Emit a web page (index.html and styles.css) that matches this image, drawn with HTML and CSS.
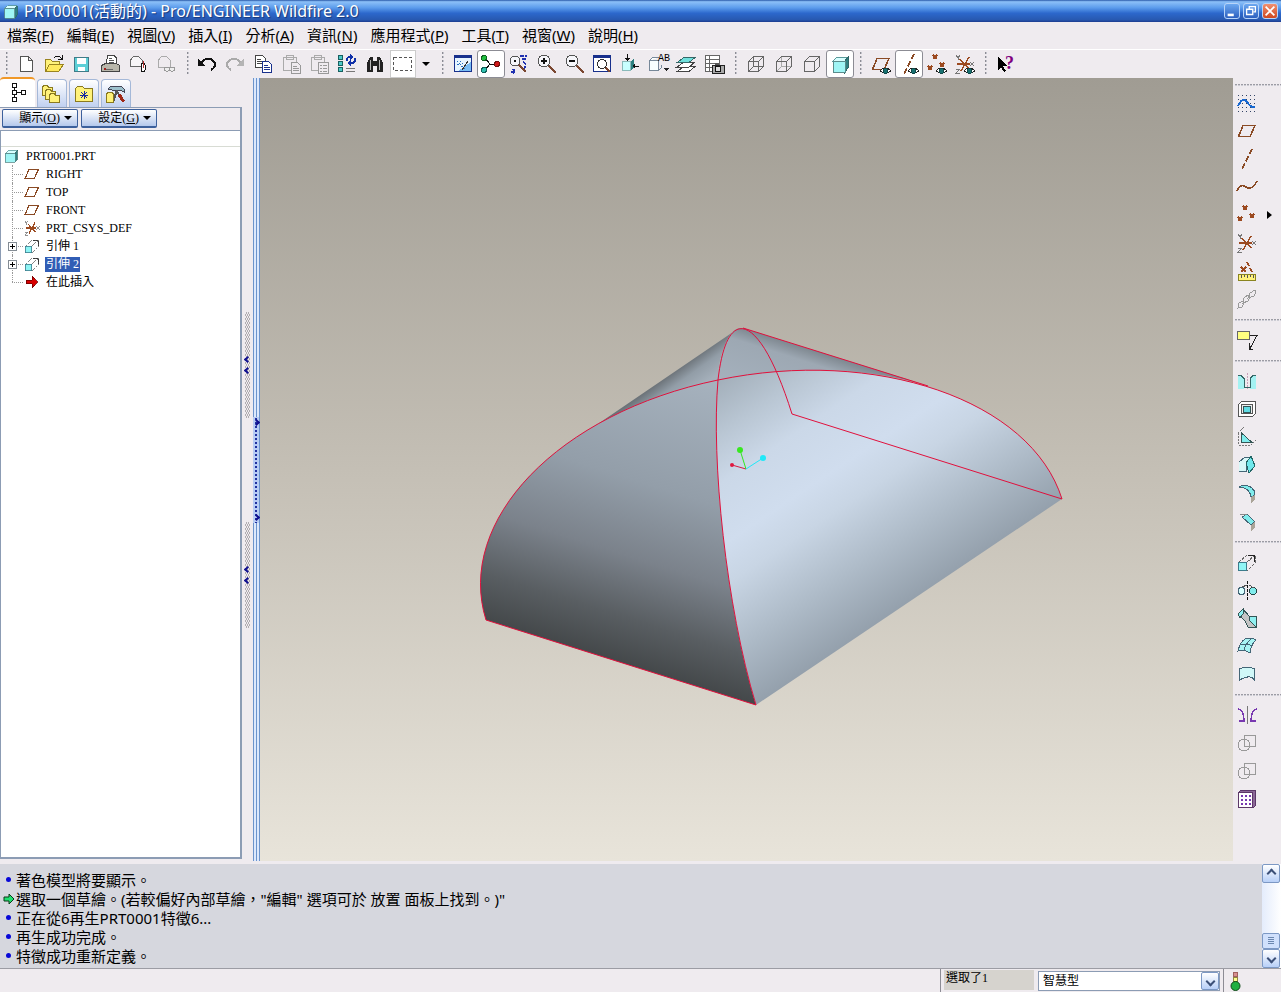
FILE: index.html
```html
<!DOCTYPE html>
<html lang="zh-Hant">
<head>
    <meta charset="UTF-8">
    <meta name="viewport" content="width=device-width, initial-scale=1.0">
    <title>PRT0001(活動的) - Pro/ENGINEER Wildfire 2.0</title>
    <link rel="stylesheet" href="styles.css">
</head>
<body>

<!-- Shared icons -->
<svg class="symbols" width="0" height="0">
    <symbol id="part" viewBox="0 0 20 20">
        <path d="M3 7l4-4h11l-3 4z" fill="#d8ffff" stroke="#5a9a9a"/>
        <path d="M15 7l3-4v11l-3 4z" fill="#2f8080" stroke="#2f6868"/>
        <path d="M3 7h12v11H3z" fill="#9ff5f5" stroke="#5a8c8c"/>
    </symbol>
    <symbol id="plane" viewBox="0 0 20 20">
        <path d="M6 4.500h12L13 15.500H1.500z" fill="none" stroke="#8a4a24" stroke-width="1.500"/>
    </symbol>
    <symbol id="axis" viewBox="0 0 20 20">
        <path d="M15 0L5 20" fill="none" stroke="#8a4a24" stroke-width="2" stroke-dasharray="6 2"/>
    </symbol>
    <symbol id="points" viewBox="0 0 20 20">
        <path d="M6 1l4 4m0-4l-4 4M1 12l4 4m0-4l-4 4M13 9l4 4m0-4l-4 4" fill="none" stroke="#9c4a20" stroke-width="1.500"/>
    </symbol>
    <symbol id="csys" viewBox="0 0 20 20">
        <path d="M2 10h13M5 5l9 10M14 3L6 17" fill="none" stroke="#9c4a20" stroke-width="1.500"/>
        <path d="M1 1l2 3 2-3M3 4v2M15 8l4 4m0-4l-4 4M1 15h4l-4 4h4" fill="none" stroke="#777"/>
    </symbol>
    <symbol id="eye" viewBox="0 0 20 20">
        <path d="M9 17q5-6 11 0q-5 4-11 0z" fill="#fff" stroke="#222"/>
        <circle cx="14.500" cy="17" r="2.500" fill="#187070" stroke="#104848"/>
    </symbol>
    <symbol id="extrude" viewBox="0 0 20 20">
        <path d="M2 10l8-7h8v8l-8 8M10 10l7-6" fill="none" stroke="#666" stroke-dasharray="3 1"/>
        <path d="M11 3.500h6.500v6" fill="none" stroke="#222"/>
        <path d="M1.500 10.500h8v8h-8z" fill="#8ff5f5" stroke="#3c7c8c"/>
    </symbol>
    <symbol id="glass" viewBox="0 0 20 20">
        <path d="M12 12l7 7" stroke="#7a4630" stroke-width="2"/>
        <circle cx="7" cy="7" r="6" fill="#f6f6fa" stroke="#555"/>
    </symbol>
    <symbol id="merge" viewBox="0 0 20 20">
        <path d="M7.500 2.500h11v11h-11z" fill="none" stroke="#999"/>
        <circle cx="7" cy="12" r="6" fill="none" stroke="#999"/>
    </symbol>
    <symbol id="folder" viewBox="0 0 20 20">
        <path d="M1.500 4.500l2-2h5l2 2h8v13h-17z" fill="#fff27a" stroke="#8a7a20"/>
    </symbol>
    <symbol id="paste" viewBox="0 0 20 20">
        <path d="M1.500 3.500h13v13h-13zM4.500 1.500h7v4h-7z" fill="none" stroke="#aaa"/>
        <path d="M9.500 8.500h6l3 3v8h-9zM11 12h4M11 14h6M11 16h6" fill="#efebef" stroke="#999"/>
    </symbol>
    <symbol id="paste-special" viewBox="0 0 20 20">
        <path d="M1.500 3.500h13v13h-13zM4.500 1.500h7v4h-7z" fill="none" stroke="#aaa"/>
        <path d="M8.500 8.500h10v11h-10zM10 11h2M13 11h4M10 14h2M13 14h4M10 17h2M13 17h4" fill="#efebef" stroke="#999"/>
    </symbol>
</svg>

<header class="titlebar">
    <svg class="icon"><use href="#part"/></svg>
    <h1 class="title">PRT0001(活動的) - Pro/ENGINEER Wildfire 2.0</h1>
    <div class="window-buttons">
        <button class="win-btn" aria-label="最小化"><svg viewBox="0 0 16 16"><path d="M3 11h7v3H3z" fill="#fff"/></svg></button>
        <button class="win-btn" aria-label="還原"><svg viewBox="0 0 16 16"><path d="M6 5V3h7v6h-2M3 6h7v6H3z" fill="none" stroke="#fff" stroke-width="1.500"/></svg></button>
        <button class="win-btn win-close" aria-label="關閉"><svg viewBox="0 0 16 16"><path d="M3 3l10 10M13 3L3 13" stroke="#fff" stroke-width="2"/></svg></button>
    </div>
</header>

<nav class="menubar">
    <button>檔案(<u>F</u>)</button>
    <button>編輯(<u>E</u>)</button>
    <button>視圖(<u>V</u>)</button>
    <button>插入(<u>I</u>)</button>
    <button>分析(<u>A</u>)</button>
    <button>資訊(<u>N</u>)</button>
    <button>應用程式(<u>P</u>)</button>
    <button>工具(<u>T</u>)</button>
    <button>視窗(<u>W</u>)</button>
    <button>說明(<u>H</u>)</button>
</nav>

<div class="toolbar">
    <span class="handle"></span>
    <button class="tool" aria-label="新建"><svg class="icon" viewBox="0 0 20 20"><path d="M3.500 2.500h8l4 4v11h-12zM11.500 2.500v4h4" fill="#fff" stroke="#555"/></svg></button>
    <button class="tool" aria-label="開啟"><svg class="icon" viewBox="0 0 20 20"><path d="M.500 17V5.500h5l2 2h7V10" fill="#fff27a" stroke="#9a8420"/><path d="M.500 17.500l4-7h14l-5 7z" fill="#ffe95e" stroke="#9a8420"/><path d="M9 4q4-4 8 1M17 1v4h-4" fill="none" stroke="#111"/></svg></button>
    <button class="tool" aria-label="儲存"><svg class="icon" viewBox="0 0 20 20"><path d="M1.500 3.500h14v14h-14z" fill="#5ccfd6" stroke="#407c88"/><path d="M4 4h9v6H4zM5 13h7v4H5z" fill="#fff"/></svg></button>
    <button class="tool" aria-label="列印"><svg class="icon" viewBox="0 0 20 20"><path d="M5.500 10l1-9h6l3 3V10" fill="#fff" stroke="#444"/><path d="M8 4h3M8 6h5M8 8h5" stroke="#555"/><path d="M.500 11.500l4-2h11l3 2v6h-18z" fill="#b8b6aa" stroke="#444"/><path d="M3 15h9" stroke="#666"/><path d="M3 15h2" stroke="#a02020" stroke-width="2"/></svg></button>
    <button class="tool" aria-label="傳送附件"><svg class="icon" viewBox="0 0 20 20"><path d="M2 12.500h11V6l-4-4H5L1.500 6v6.500" fill="#f7f5f7" stroke="#666"/><rect x="12" y="9" width="4" height="9" rx="2" fill="#fff" stroke="#111"/><path d="M14 7v7" stroke="#b03030"/></svg></button>
    <button class="tool" aria-label="傳送連結"><svg class="icon" viewBox="0 0 20 20"><path d="M2 13.500h11V6l-4-4H5L1.500 6v7.500z" fill="none" stroke="#aaa"/><rect x="7" y="13" width="6" height="4" rx="2" fill="#eee" stroke="#999"/><rect x="12" y="13" width="6" height="4" rx="2" fill="#eee" stroke="#999"/></svg></button>
    <span class="handle"></span>
    <button class="tool" aria-label="復原"><svg class="icon" viewBox="0 0 20 20"><path d="M3 9q8-9 14 0q1 4-4 7" fill="none" stroke="#111" stroke-width="2"/><path d="M0 5v7h8z" fill="#111"/></svg></button>
    <button class="tool" aria-label="重做"><svg class="icon" viewBox="0 0 20 20"><path d="M15 9Q8 0 1 9q-1 4 4 7" fill="none" stroke="#aaa" stroke-width="2"/><path d="M18 5v7h-8z" fill="#b4b4b4"/></svg></button>
    <button class="tool" aria-label="複製"><svg class="icon" viewBox="0 0 20 20"><path d="M1.500 1.500h7l3 3v9h-10zM3 5h4M3 7h6M3 9h6" fill="#fff" stroke="#444"/><path d="M8.500 7.500h6l3 3v8h-9zM10 11h4M10 13h6M10 15h6" fill="#fff" stroke="#18308c"/></svg></button>
    <button class="tool" aria-label="貼上"><svg class="icon"><use href="#paste"/></svg></button>
    <button class="tool" aria-label="選擇性貼上"><svg class="icon"><use href="#paste-special"/></svg></button>
    <button class="tool" aria-label="再生"><svg class="icon" viewBox="0 0 20 20"><path d="M.500 1.500h4v4h-4zM.500 7.500h4v4h-4zM.500 13.500h4v4h-4z" fill="#4cc8c8" stroke="#186060"/><path d="M9 7q-1-5 5-4M17 4q2 5-5 5" fill="none" stroke="#1030a8" stroke-width="2"/><path d="M12 0v6l4-3zM13 6v6l-4-3z" fill="#1030a8"/><path d="M8 14h9M8 17h9" stroke="#777"/></svg></button>
    <button class="tool" aria-label="尋找"><svg class="icon" viewBox="0 0 20 20"><path d="M1 9l3-6h3v4h4V3h3l3 6v9h-6v-6H7v6H1z" fill="#222"/><path d="M4 6v10M13 6v10" stroke="#bbb"/></svg></button>
    <button class="tool tool-select" aria-label="選取框"><svg class="icon" viewBox="0 0 20 20"><path d="M.500 3.500h18v13h-18z" fill="none" stroke="#555" stroke-dasharray="3 2"/></svg></button>
    <button class="tool tool-drop" aria-label="選取選項"><span class="arrow-down"></span></button>
    <span class="handle"></span>
    <button class="tool" aria-label="重繪"><svg class="icon" viewBox="0 0 20 20"><path d="M1.500 1.500h17v16h-17z" fill="#e6f4ff" stroke="#18308c"/><path d="M1 1h18v3H1z" fill="#18308c"/><path d="M5 17l13-9v9z" fill="#78bcf4"/><path d="M4 7l4 4M4 10l4 1M8 12l5 3M7 7l3 3" stroke="#2870c0" stroke-dasharray="2 1"/><path d="M9 16l6-9" stroke="#333"/></svg></button>
    <button class="tool pressed" aria-label="旋轉中心"><svg class="icon" viewBox="0 0 20 20"><path d="M4 4l5 6-5 6M9 10h7" fill="none" stroke="#111"/><circle cx="3" cy="4" r="2.500" fill="#22c040" stroke="#106020"/><circle cx="3" cy="16" r="2.500" fill="#30c0b0" stroke="#106058"/><circle cx="16" cy="10" r="2.500" fill="#d01818" stroke="#701010"/></svg></button>
    <button class="tool" aria-label="定向模式"><svg class="icon" viewBox="0 0 20 20"><path d="M10 11l7 7" stroke="#7a4630" stroke-width="2"/><circle cx="6" cy="7" r="5" fill="#f6f6fa" stroke="#555"/><circle cx="6" cy="7" r="1" fill="#111"/><path d="M11 2h7M13 5h5M14 8q5 3 1 6M5 19q-4-1-2-4M5 15v5" fill="none" stroke="#2030b0" stroke-width="1.500" stroke-dasharray="4 1"/></svg></button>
    <button class="tool" aria-label="放大"><svg class="icon"><use href="#glass"/><path d="M4 7h6M7 4v6" stroke="#111" stroke-width="2"/></svg></button>
    <button class="tool" aria-label="縮小"><svg class="icon"><use href="#glass"/><path d="M4 7h6" stroke="#111" stroke-width="2"/></svg></button>
    <button class="tool" aria-label="重新調整"><svg class="icon" viewBox="0 0 20 20"><path d="M.500 1.500h17v16h-17z" fill="#fff" stroke="#18308c"/><path d="M0 1h18v3H0z" fill="#18308c"/><path d="M12 13l5 5" stroke="#7a4630" stroke-width="2"/><circle cx="9" cy="10" r="4.500" fill="#fff" stroke="#333"/></svg></button>
    <button class="tool" aria-label="重定向"><svg class="icon" viewBox="0 0 20 20"><path d="M1.500 7.500h8v9h-8z" fill="#c8ffff" stroke="#8ababa"/><path d="M10 8l3-4v9l-3 4z" fill="#2c8080"/><path d="M6 0v6M18 12h-6" stroke="#111"/><path d="M3 4h6l-3 3zM14 9v6l-3-3z" fill="#111"/></svg></button>
    <button class="tool" aria-label="視圖清單"><svg class="icon" viewBox="0 0 20 20"><path d="M.500 6.500l3-3h6M.500 6.500h9v10h-9zM9.500 16.500l3-3v-3" fill="#f8ffff" stroke="#789"/><text x="9" y="7" class="icon-text">AB</text><path d="M14 14h6l-3 3z" fill="#222"/></svg></button>
    <button class="tool" aria-label="圖層"><svg class="icon" viewBox="0 0 20 20"><path d="M0 17.500h12l6-5H7z" fill="#fff" stroke="#444"/><path d="M0 13h12l6-5H7z" fill="#fff" stroke="#444"/><path d="M0 8.500h12l6-5H7z" fill="#70e0dc" stroke="#356868"/></svg></button>
    <button class="tool" aria-label="視圖管理員"><svg class="icon" viewBox="0 0 20 20"><path d="M.500 1.500h14v16h-14zM4 2v15M1 5h13M1 9h13M1 13h13" fill="#fff" stroke="#666"/><path d="M7.500 11.500h12v8h-12z" fill="#aaa" stroke="#222"/><path d="M10 9h4v2h-4z" fill="#555"/><circle cx="13" cy="15" r="3" fill="#ddd" stroke="#111"/></svg></button>
    <span class="handle"></span>
    <button class="tool" aria-label="線框"><svg class="icon" viewBox="0 0 20 20"><path d="M2.500 7.500h10v10h-10zM2.500 7.500l5-5h10l-5 5M17.500 2.500v10l-5 5M7.500 2.500v10h10M7.500 12.500l-5 5" fill="none" stroke="#666"/></svg></button>
    <button class="tool" aria-label="隱藏線"><svg class="icon" viewBox="0 0 20 20"><path d="M7.500 2.500v10h10M7.500 12.500l-5 5" fill="none" stroke="#aaa"/><path d="M2.500 7.500h10v10h-10zM2.500 7.500l5-5h10l-5 5M17.500 2.500v10l-5 5" fill="none" stroke="#666"/></svg></button>
    <button class="tool" aria-label="無隱藏線"><svg class="icon" viewBox="0 0 20 20"><path d="M2.500 7.500h10v10h-10zM2.500 7.500l5-5h10l-5 5M17.500 2.500v10l-5 5" fill="none" stroke="#666"/></svg></button>
    <button class="tool pressed" aria-label="著色"><svg class="icon"><use href="#part"/></svg></button>
    <span class="handle"></span>
    <button class="tool" aria-label="顯示平面"><svg class="icon"><use href="#plane"/><use href="#eye"/></svg></button>
    <button class="tool pressed" aria-label="顯示軸"><svg class="icon"><use href="#axis"/><use href="#eye"/></svg></button>
    <button class="tool" aria-label="顯示點"><svg class="icon"><use href="#points"/><use href="#eye"/></svg></button>
    <button class="tool" aria-label="顯示座標系"><svg class="icon"><use href="#csys"/><use href="#eye"/></svg></button>
    <span class="handle"></span>
    <button class="tool" aria-label="內容說明"><svg class="icon" viewBox="0 0 20 20"><path d="M2 3v13l3-3 3 5 2-1-3-5h4z" fill="#000"/><text x="9" y="15" class="help-mark">?</text></svg></button>
</div>

<main class="workspace">
    <aside class="navigator">
        <div class="tabs">
            <button class="tab active" aria-label="模型樹"><svg class="icon" viewBox="0 0 20 20"><path d="M4.500.500h4v4h-4zM4.500 7.500h4v4h-4zM4.500 14.500h4v4h-4zM13.500 7.500h4v4h-4zM6.500 5v2M6.500 12v2M9 9.500h4" fill="none" stroke="#111"/></svg></button>
            <button class="tab" aria-label="資料夾瀏覽器"><svg class="icon" viewBox="0 0 20 20"><path d="M.500 3.500l1-2h4l1 2h4v8h-10z" fill="#fff27a" stroke="#8a7a20"/><path d="M3.500 7.500l1-2h4l1 2h4v8h-10z" fill="#fff27a" stroke="#8a7a20"/><path d="M7.500 11.500l1-2h4l1 2h4v7h-10z" fill="#fff27a" stroke="#8a7a20"/></svg></button>
            <button class="tab" aria-label="我的最愛"><svg class="icon"><use href="#folder"/><path d="M10 7v8M6 11h8M7 8l6 6M13 8l-6 6" stroke="#1828a0"/></svg></button>
            <button class="tab" aria-label="連線"><svg class="icon" viewBox="0 0 20 20"><path d="M2 5l3-3h10l3 3v3l-4-2H6z" fill="#9cc0cc" stroke="#445"/><path d="M11 6L7 18M11 8l5 7" stroke="#555" stroke-width="2"/><path d="M14 9l5 8-3 1-4-6z" fill="#a02818"/><path d="M.500 10.500l1-2h5l1 2v8h-7z" fill="#fff27a" stroke="#8a7a20"/></svg></button>
        </div>
        <div class="nav-actions">
            <button class="nav-btn"><span>顯示(<u>O</u>)</span><span class="arrow-down"></span></button>
            <button class="nav-btn"><span>設定(<u>G</u>)</span><span class="arrow-down"></span></button>
        </div>
        <div class="tree-panel">
            <div class="tree-head"></div>
            <div class="tree-root"><svg class="tree-icon"><use href="#part"/></svg><span class="tree-name">PRT0001.PRT</span></div>
            <ul class="tree">
                <li><svg class="tree-icon"><use href="#plane"/></svg><span class="tree-name">RIGHT</span></li>
                <li><svg class="tree-icon"><use href="#plane"/></svg><span class="tree-name">TOP</span></li>
                <li><svg class="tree-icon"><use href="#plane"/></svg><span class="tree-name">FRONT</span></li>
                <li><svg class="tree-icon"><use href="#csys"/></svg><span class="tree-name">PRT_CSYS_DEF</span></li>
                <li><button class="expand" aria-label="展開"></button><svg class="tree-icon"><use href="#extrude"/></svg><span class="tree-name">引伸 1</span></li>
                <li><button class="expand" aria-label="展開"></button><svg class="tree-icon"><use href="#extrude"/></svg><span class="tree-name selected">引伸 2</span></li>
                <li><svg class="tree-icon" viewBox="0 0 20 20"><path d="M3 8h7V2l7 8-7 8v-6H3z" fill="#d80000" stroke="#700000"/></svg><span class="tree-name">在此插入</span></li>
            </ul>
        </div>
    </aside>

    <div class="splitter">
        <div class="grip-column">
            <span class="grip"><i class="chevron"></i><i class="chevron"></i></span>
            <span class="grip"><i class="chevron"></i><i class="chevron"></i></span>
        </div>
        <div class="sash">
            <span class="sash-grip"><i class="chevron right"></i><i class="chevron right"></i></span>
        </div>
    </div>

    <section class="viewport">
        <svg class="model" viewBox="260 78 973 783" preserveAspectRatio="xMidYMid meet">
            <defs>
                <linearGradient id="frontShade" gradientUnits="userSpaceOnUse" x1="756" y1="705" x2="845" y2="421">
                    <stop offset="0" stop-color="#44484a"/>
                    <stop offset="0.150" stop-color="#595e62"/>
                    <stop offset="0.350" stop-color="#7b828b"/>
                    <stop offset="0.600" stop-color="#939ea9"/>
                    <stop offset="1" stop-color="#a6b2be"/>
                </linearGradient>
                <linearGradient id="rightShade" gradientUnits="userSpaceOnUse" x1="756" y1="705" x2="594" y2="463">
                    <stop offset="0" stop-color="#94a0ac"/>
                    <stop offset="0.200" stop-color="#aebbc8"/>
                    <stop offset="0.400" stop-color="#c8d5e4"/>
                    <stop offset="0.520" stop-color="#d0ddee"/>
                    <stop offset="0.700" stop-color="#cbd8e8"/>
                    <stop offset="0.850" stop-color="#b8c5d2"/>
                    <stop offset="1" stop-color="#a3afba"/>
                </linearGradient>
                <linearGradient id="backLeftShade" gradientUnits="userSpaceOnUse" x1="594" y1="463" x2="576" y2="438">
                    <stop offset="0" stop-color="#a5b0bb"/>
                    <stop offset="0.500" stop-color="#929da7"/>
                    <stop offset="1" stop-color="#62686d"/>
                </linearGradient>
                <linearGradient id="backRightShade" gradientUnits="userSpaceOnUse" x1="845" y1="421" x2="863" y2="364">
                    <stop offset="0" stop-color="#a5b1bd"/>
                    <stop offset="0.750" stop-color="#9da8b3"/>
                    <stop offset="1" stop-color="#7a838b"/>
                </linearGradient>
            </defs>
            <!-- Faces -->
            <path d="M592 428L733 332Q718 352 718 380Q650 394 592 428z" fill="url(#backLeftShade)"/>
            <path d="M718 380C720 350 729 326 743 328L932 387C860 364 780 367 718 380z" fill="url(#backRightShade)"/>
            <path d="M486 620C455 521 558 413 718 380C711 460 726 606 756 705z" fill="url(#frontShade)"/>
            <path d="M718 380C876 347 1031 400 1062 499L756 705C726 606 711 460 718 380z" fill="url(#rightShade)"/>
            <!-- Highlighted edges -->
            <g class="edges">
                <path d="M486 620C455 521 558 413 718 380C876 347 1031 400 1062 499"/>
                <path d="M756 705C726 606 711 460 718 380C727 300 761 315 792 414"/>
                <path d="M486 620L756 705M792 414L1062 499M743 328L928 386"/>
            </g>
            <!-- Spin center -->
            <path d="M746 469L732 465" stroke="#d81840"/><circle cx="732" cy="465" r="2" fill="#e01840"/>
            <path d="M746 469L740 450" stroke="#30e820"/><circle cx="740" cy="450" r="3" fill="#38e820"/>
            <path d="M746 469L763 458" stroke="#20e8f8"/><circle cx="763" cy="458" r="3" fill="#20e8f8"/>
        </svg>
    </section>

    <div class="feature-bar">
        <span class="rule"></span>
        <button class="tool" aria-label="草繪"><svg class="icon" viewBox="0 0 20 20"><path d="M1 2.500h18M1 6.500h18M1 10.500h18M1 14.500h18M1 18.500h18" stroke="#346" stroke-dasharray="1 3"/><path d="M1 13Q6 3 10 9t8 5" fill="none" stroke="#1868d0" stroke-width="2"/></svg></button>
        <button class="tool" aria-label="平面"><svg class="icon"><use href="#plane"/></svg></button>
        <button class="tool" aria-label="軸"><svg class="icon"><use href="#axis"/></svg></button>
        <button class="tool" aria-label="曲線"><svg class="icon" viewBox="0 0 20 20"><path d="M0 14Q3 6 9 10t11-6" fill="none" stroke="#8a4a24" stroke-width="1.500"/></svg></button>
        <div class="tool-row">
            <button class="tool" aria-label="點"><svg class="icon"><use href="#points"/></svg></button>
            <button class="flyout" aria-label="更多點工具"></button>
        </div>
        <button class="tool" aria-label="座標系"><svg class="icon"><use href="#csys"/></svg></button>
        <button class="tool" aria-label="分析特徵"><svg class="icon" viewBox="0 0 20 20"><path d="M4 6l5 5m0-5l-5 5M10 1l2 4M13 7l2 4" stroke="#9c4a20" stroke-width="1.500"/><path d="M1.500 13.500h17v6h-17z" fill="#fff27a" stroke="#8a8420"/><path d="M4.500 14v3M7.500 14v2M10.500 14v3M13.500 14v2M16.500 14v3" stroke="#555"/></svg></button>
        <button class="tool" aria-label="參照"><svg class="icon" viewBox="0 0 20 20"><path d="M1 19l1-5 4-2 1 2-2 4zM6 14l1-5 4-3 2 2-2 4zM11 9l2-5 5-3 1 2-2 4z" fill="none" stroke="#999"/></svg></button>
        <span class="rule"></span>
        <button class="tool" aria-label="註釋"><svg class="icon" viewBox="0 0 20 20"><path d="M.500 1.500h12v8H.500z" fill="#ffff80" stroke="#666"/><path d="M13 5.500h7l-7 13M12 13v6h4" fill="none" stroke="#222"/></svg></button>
        <span class="rule"></span>
        <button class="tool" aria-label="孔"><svg class="icon" viewBox="0 0 20 20"><path d="M1 4h3l3 3v11H1zM19 4h-3l-3 3v11h6z" fill="#a4f2f2"/><path d="M1 4.500h3l3 3v9h6v-9l3-3h3" fill="none" stroke="#366"/><path d="M10 2v16" stroke="#c8a0b8" stroke-dasharray="2 1"/></svg></button>
        <button class="tool" aria-label="薄殼"><svg class="icon" viewBox="0 0 20 20"><path d="M1.500 5.500l3-3h14v12l-3 3h-14z" fill="#fff" stroke="#555"/><path d="M4.500 5.500h11v9h-11z" fill="#eee" stroke="#555"/><path d="M6.500 7.500h7v6h-7z" fill="#60dce4" stroke="#355"/></svg></button>
        <button class="tool" aria-label="筋"><svg class="icon" viewBox="0 0 20 20"><path d="M4.500 6v9h10z" fill="#80ecec" stroke="#355"/><path d="M1.500 6v12H14l6-6M1 6l6-6" fill="none" stroke="#777" stroke-dasharray="2 1"/></svg></button>
        <button class="tool" aria-label="拔模"><svg class="icon" viewBox="0 0 20 20"><path d="M2 7l6-5h6L9 7v9H2" fill="#d8f8f8" stroke="#467"/><path d="M9 8l5-7 4 10-6 7z" fill="#70e8ec" stroke="#266"/></svg></button>
        <button class="tool" aria-label="倒圓角"><svg class="icon" viewBox="0 0 20 20"><path d="M2 4l4-2q12 1 12 10l-4 2Q13 5 2 4z" fill="#80ecec" stroke="#467"/><path d="M14 14l4-2v5l-4 3z" fill="#aaa498"/></svg></button>
        <button class="tool" aria-label="倒角"><svg class="icon" viewBox="0 0 20 20"><path d="M5 6l5-3 8 8-4 3z" fill="#80ecec" stroke="#467"/><path d="M14 14l4-3v5l-4 4z" fill="#aaa498"/><path d="M3 3h7" stroke="#888"/></svg></button>
        <span class="rule"></span>
        <button class="tool" aria-label="引伸"><svg class="icon"><use href="#extrude"/></svg></button>
        <button class="tool" aria-label="旋轉"><svg class="icon" viewBox="0 0 20 20"><path d="M10.500 1v19" stroke="#111" stroke-dasharray="3 1"/><circle cx="4.500" cy="11" r="3.500" fill="#d8ffff" stroke="#467"/><circle cx="16" cy="11" r="3.500" fill="#80ecec" stroke="#244"/><path d="M5 7l5-2M12 5l5 3" stroke="#555"/></svg></button>
        <button class="tool" aria-label="可變截面掃描"><svg class="icon" viewBox="0 0 20 20"><path d="M1 6l5-5 6 7h7v11h-8L8 13z" fill="#c4c4c4" stroke="#355"/><path d="M1 6l5-5v5l-3 4zM12 8h7v11l-7-7z" fill="#90f0f0" stroke="#355"/></svg></button>
        <button class="tool" aria-label="邊界混成"><svg class="icon" viewBox="0 0 20 20"><path d="M1 15Q3 6 8 3q6-2 11 1-5 4-6 13-6-4-12-2z" fill="#a8f4f4" stroke="#467"/><path d="M7 15q1-7 7-12M4 9q6-2 12 1" fill="none" stroke="#467"/></svg></button>
        <button class="tool" aria-label="造型"><svg class="icon" viewBox="0 0 20 20"><path d="M2.500 5q7-4 15 0v12q-2-5-7-4t-8 3z" fill="#d0f8f8" stroke="#467"/></svg></button>
        <span class="rule"></span>
        <button class="tool" aria-label="鏡像"><svg class="icon" viewBox="0 0 20 20"><path d="M10.500 1v18" stroke="#777"/><path d="M1 4q6 1 6 12H2M20 4q-6 1-6 12h5" fill="none" stroke="#7838b0" stroke-width="1.500"/></svg></button>
        <button class="tool" aria-label="合併"><svg class="icon"><use href="#merge"/></svg></button>
        <button class="tool" aria-label="修剪"><svg class="icon"><use href="#merge"/></svg></button>
        <button class="tool" aria-label="陣列"><svg class="icon" viewBox="0 0 20 20"><path d="M1.500 3.500l2-2h15v15l-2 2h-15z" fill="#8c6898" stroke="#5c3868"/><path d="M1.500 3.500h14v15h-14z" fill="#fff" stroke="#5c3868"/><path d="M4 7h10M4 11h10M4 15h10" stroke="#7838b0" stroke-width="2" stroke-dasharray="2 2"/></svg></button>
    </div>
</main>

<section class="messages">
    <ul class="log">
        <li>著色模型將要顯示。</li>
        <li class="prompt"><svg class="prompt-icon" viewBox="0 0 12 12"><path d="M1 4h5V1l5 5-5 5V8H1z" fill="#20e070" stroke="#0a3a18"/></svg>選取一個草繪。(若較偏好內部草繪，"編輯" 選項可於 放置 面板上找到。)"</li>
        <li>正在從6再生PRT0001特徵6...</li>
        <li>再生成功完成。</li>
        <li>特徵成功重新定義。</li>
    </ul>
    <div class="scrollbar">
        <button class="scroll-btn" aria-label="向上捲動"><i class="chevron up"></i></button>
        <span class="thumb"></span>
        <button class="scroll-btn" aria-label="向下捲動"><i class="chevron down"></i></button>
    </div>
</section>

<footer class="statusbar">
    <div class="selection">選取了1</div>
    <div class="filter">
        <select aria-label="選取過濾器"><option>智慧型</option></select>
        <span class="filter-arrow"><i class="chevron down"></i></span>
    </div>
    <div class="signal">
        <svg viewBox="0 0 12 20"><rect x="3.500" y=".500" width="4" height="4" fill="#d89090" stroke="#a06060"/><rect x="3.500" y="5.500" width="4" height="4" fill="#ffff90" stroke="#908840"/><circle cx="5.500" cy="14" r="4.500" fill="#20b040" stroke="#104818"/></svg>
    </div>
</footer>

</body>
</html>
```
FILE: styles.css
```css
* {
    box-sizing: border-box;
}
body {
    margin: 0;
    height: 100vh;
    display: flex;
    flex-direction: column;
    overflow: hidden;
    background-color: #efebef;
    color: #000;
    font-family: "Noto Sans", "Noto Sans CJK TC", sans-serif;
    font-size: 15px;
}
button {
    margin: 0;
    padding: 0;
    border: none;
    background: none;
    color: inherit;
    font: inherit;
}
ul {
    list-style: none;
    margin: 0;
    padding: 0;
}
.symbols {
    position: absolute;
}
.icon {
    width: 20px;
    height: 20px;
    flex: none;
    overflow: visible;
    shape-rendering: crispEdges;
}
.icon-text {
    font: 10px "Liberation Mono", monospace;
}
.help-mark {
    font: bold 18px "Liberation Serif", serif;
    fill: #800080;
}

/* Title bar */
.titlebar {
    display: flex;
    align-items: center;
    height: 22px;
    padding: 0 3px 0 2px;
    background: linear-gradient(#2858a8 0, #8cc0f8 8%, #5c9cec 35%, #2c68cc 60%, #2858b0 90%, #1c3c90 100%);
    color: #fff;
}
.titlebar .icon {
    width: 17px;
    height: 17px;
}
.title {
    flex: 1;
    margin: 0 0 0 5px;
    font-size: 16px;
    font-weight: normal;
    line-height: 20px;
    text-shadow: 1px 1px 1px #183878;
}
.window-buttons {
    display: flex;
    gap: 3px;
}
.win-btn {
    width: 16px;
    height: 16px;
    border: 1px solid #b8d4f8;
    border-radius: 3px;
    background: linear-gradient(#6ca8f0, #2c60c0);
}
.win-btn svg {
    display: block;
    width: 14px;
    height: 14px;
}
.win-close {
    background: linear-gradient(#f09070, #d04820);
}

/* Menu */
.menubar {
    display: flex;
    gap: 13px;
    height: 28px;
    padding: 0 7px;
    border-bottom: 1px solid #fff;
    line-height: 27px;
}
.menubar button {
    white-space: nowrap;
}

/* Toolbar */
.toolbar {
    display: flex;
    height: 28px;
}
.handle {
    width: 13px;
    margin: 2px 0;
    background: linear-gradient(90deg, transparent 6px, #8c8c94 6px, #8c8c94 7px, #c4c4cc 7px, #c4c4cc 8px, transparent 8px);
    -webkit-mask: repeating-linear-gradient(#000 0, #000 2px, transparent 2px, transparent 4px);
    mask: repeating-linear-gradient(#000 0, #000 2px, transparent 2px, transparent 4px);
}
.tool {
    display: flex;
    align-items: center;
    justify-content: center;
    width: 28px;
    height: 28px;
}
.pressed {
    border: 1px solid #8c8c94;
    border-radius: 3px;
    background-color: #fff;
}
.tool-select {
    width: 26px;
    border: 1px solid #ccc;
    background-color: #fff;
}
.tool-drop {
    width: 20px;
}
.arrow-down {
    width: 0;
    border: 4px solid transparent;
    border-top: 4px solid #000;
    border-bottom: none;
}

/* Workspace */
.workspace {
    flex: 1;
    display: flex;
    min-height: 0;
}
.navigator {
    display: flex;
    flex-direction: column;
    width: 242px;
    padding-bottom: 2px;
}
.tabs {
    display: flex;
    align-items: flex-end;
    gap: 2px;
    height: 30px;
    border-bottom: 1px solid #8c9cb4;
}
.tab {
    display: flex;
    align-items: center;
    justify-content: center;
    width: 30px;
    height: 28px;
    border: 1px solid #a4b8d8;
    border-bottom: none;
    border-radius: 4px 4px 0 0;
    background: linear-gradient(#fff, #c0d0f0);
}
.tab.active {
    width: 35px;
    height: 30px;
    border: none;
    border-top: 2px solid #f09828;
    background: #fff;
}
.nav-actions {
    display: flex;
    gap: 3px;
    height: 22px;
    padding: 1px 2px;
    border-right: 2px solid #8c9cb4;
}
.nav-btn {
    display: flex;
    align-items: center;
    justify-content: flex-end;
    gap: 4px;
    width: 76px;
    height: 19px;
    padding-right: 5px;
    border: 1px solid #3c609c;
    border-bottom-width: 2px;
    border-radius: 2px;
    background: linear-gradient(#fff, #b4c8ec);
    font-family: "Liberation Serif", "Noto Sans CJK TC", serif;
    font-size: 12px;
    line-height: 16px;
    white-space: nowrap;
}
.tree-panel {
    flex: 1;
    border: 1px solid #8c9cb4;
    border-width: 1px 2px 2px 1px;
    background-color: #fff;
    font-family: "Liberation Serif", "Noto Sans CJK TC", serif;
    font-size: 12px;
}
.tree-head {
    height: 16px;
    border-bottom: 1px solid #d8dcd4;
}
.tree-root, .tree li {
    display: flex;
    align-items: center;
    height: 18px;
}
.tree-root {
    padding-left: 2px;
}
.tree-root .tree-icon {
    margin-right: 6px;
}
.tree-icon {
    width: 16px;
    height: 16px;
    flex: none;
    shape-rendering: crispEdges;
}
.tree-name {
    padding: 0 1px;
    line-height: 15px;
    white-space: nowrap;
}
.tree li {
    position: relative;
    gap: 5px;
    padding-left: 23px;
}
.tree li::before, .tree li::after {
    content: "";
    position: absolute;
    left: 11px;
}
.tree li::before {
    top: 0;
    bottom: 0;
    border-left: 1px dotted #999;
}
.tree li:last-child::before {
    bottom: 9px;
}
.tree li::after {
    top: 9px;
    width: 11px;
    border-top: 1px dotted #999;
}
.selected {
    background-color: #315db5;
    color: #fff;
}
.expand {
    position: absolute;
    z-index: 1;
    left: 7px;
    top: 5px;
    width: 9px;
    height: 9px;
    border: 1px solid #848c94;
    background: linear-gradient(#000, #000) center / 5px 1px no-repeat, linear-gradient(#000, #000) center / 1px 5px no-repeat, #fff;
}

/* Splitter */
.splitter {
    display: flex;
    width: 18px;
}
.grip-column {
    display: flex;
    flex-direction: column;
    align-items: center;
    justify-content: center;
    gap: 104px;
    width: 11px;
}
.grip, .sash-grip {
    display: flex;
    flex-direction: column;
    align-items: center;
    height: 106px;
}
.grip {
    justify-content: center;
    gap: 6px;
    width: 5px;
    background: repeating-conic-gradient(#b0acb0 0 25%, #efebef 0 50%) 0 0 / 2px 4px;
}
.chevron {
    width: 5px;
    height: 5px;
    border: solid #101090;
    border-width: 2px 0 0 2px;
    transform: rotate(-45deg);
}
.chevron.right {
    transform: rotate(135deg);
}
.chevron.up {
    transform: rotate(45deg);
}
.chevron.down {
    transform: rotate(225deg);
}
.sash {
    display: flex;
    align-items: center;
    width: 7px;
    background: linear-gradient(90deg, #6c94cc 1px, #dce8fc 1px, #dce8fc 3px, #6c94cc 3px, #6c94cc 4px, #dce8fc 4px, #dce8fc 6px, #6c94cc 6px);
}
.sash-grip {
    justify-content: space-between;
    width: 6px;
    padding: 3px 0;
    background: radial-gradient(circle, #2030a0 1px, transparent 1px) 0 0 / 6px 4px, #b8ccf4;
}

/* 3D view */
.viewport {
    flex: 1;
    min-width: 0;
    background: linear-gradient(#a09c93, #c4bfb5 50%, #e8e4da);
}
.model {
    display: block;
    width: 100%;
    height: 100%;
}
.edges {
    fill: none;
    stroke: #e0103c;
    stroke-width: 1;
}

/* Feature toolbar */
.feature-bar {
    width: 48px;
}
.rule {
    display: block;
    height: 13px;
    margin-left: 2px;
    background: linear-gradient(transparent 6px, #9c9ca4 6px, #9c9ca4 7px, #ccccd4 7px, #ccccd4 8px, transparent 8px);
    -webkit-mask: repeating-linear-gradient(90deg, #000 0, #000 2px, transparent 2px, transparent 3px);
    mask: repeating-linear-gradient(90deg, #000 0, #000 2px, transparent 2px, transparent 3px);
}
.rule:first-child {
    height: 11px;
}
.tool-row {
    display: flex;
    align-items: center;
    gap: 6px;
}
.flyout {
    width: 0;
    border: 4px solid transparent;
    border-left: 5px solid #000;
    border-right: none;
}

/* Messages */
.messages {
    display: flex;
    justify-content: space-between;
    height: 105px;
    margin-top: 3px;
    border-bottom: 1px solid #9c9ca4;
    background-color: #d6d7de;
}
.log {
    padding-top: 6px;
}
.log li {
    display: flex;
    align-items: center;
    height: 19px;
    padding-left: 3px;
    white-space: pre;
}
.log li:not(.prompt)::before {
    content: "";
    width: 5px;
    height: 5px;
    margin: 0 5px 0 3px;
    border-radius: 50%;
    background-color: #0808d8;
}
.prompt-icon {
    width: 12px;
    height: 12px;
    margin-right: 1px;
}
.scrollbar {
    display: flex;
    flex-direction: column;
    width: 19px;
    padding-right: 1px;
    background: linear-gradient(90deg, #e4ecfc, #fff);
}
.scroll-btn, .filter-arrow {
    display: flex;
    align-items: center;
    justify-content: center;
    height: 19px;
    border: 1px solid #7c98c4;
    border-radius: 2px;
    background: linear-gradient(#fff, #b8d0f8);
}
.scroll-btn .chevron, .filter-arrow .chevron {
    width: 7px;
    height: 7px;
    border-color: #3c5078;
}
.thumb {
    height: 16px;
    margin-top: auto;
    border: 1px solid #7c98c4;
    border-radius: 2px;
    background: repeating-linear-gradient(#6c88b0 0, #6c88b0 1px, transparent 1px, transparent 2px) center / 6px 8px no-repeat, #d0e0fc;
}

/* Status bar */
.statusbar {
    display: flex;
    justify-content: flex-end;
    height: 23px;
    font-family: "Liberation Serif", "Noto Sans CJK TC", serif;
    font-size: 12px;
}
.selection {
    width: 94px;
    padding: 0 2px;
    border-left: 1px solid #8c8c94;
    background: linear-gradient(#d6d3ce, #d6d3ce) 3px 1px / 90px 20px no-repeat;
    line-height: 18px;
    text-indent: 3px;
}
.filter {
    position: relative;
    width: 182px;
    margin: 2px 3px 1px 4px;
}
.filter select {
    appearance: none;
    width: 100%;
    height: 100%;
    padding: 0 20px 0 4px;
    border: 1px solid #8c9cb4;
    border-radius: 0;
    background-color: #fff;
    color: #000;
    font: inherit;
}
.filter-arrow {
    position: absolute;
    top: 1px;
    right: 1px;
    bottom: 1px;
    width: 18px;
    height: auto;
    pointer-events: none;
}
.signal {
    width: 58px;
    padding: 3px 6px;
    border-left: 1px solid #8c8c94;
}
.signal svg {
    display: block;
    width: 12px;
    height: 20px;
}
```
